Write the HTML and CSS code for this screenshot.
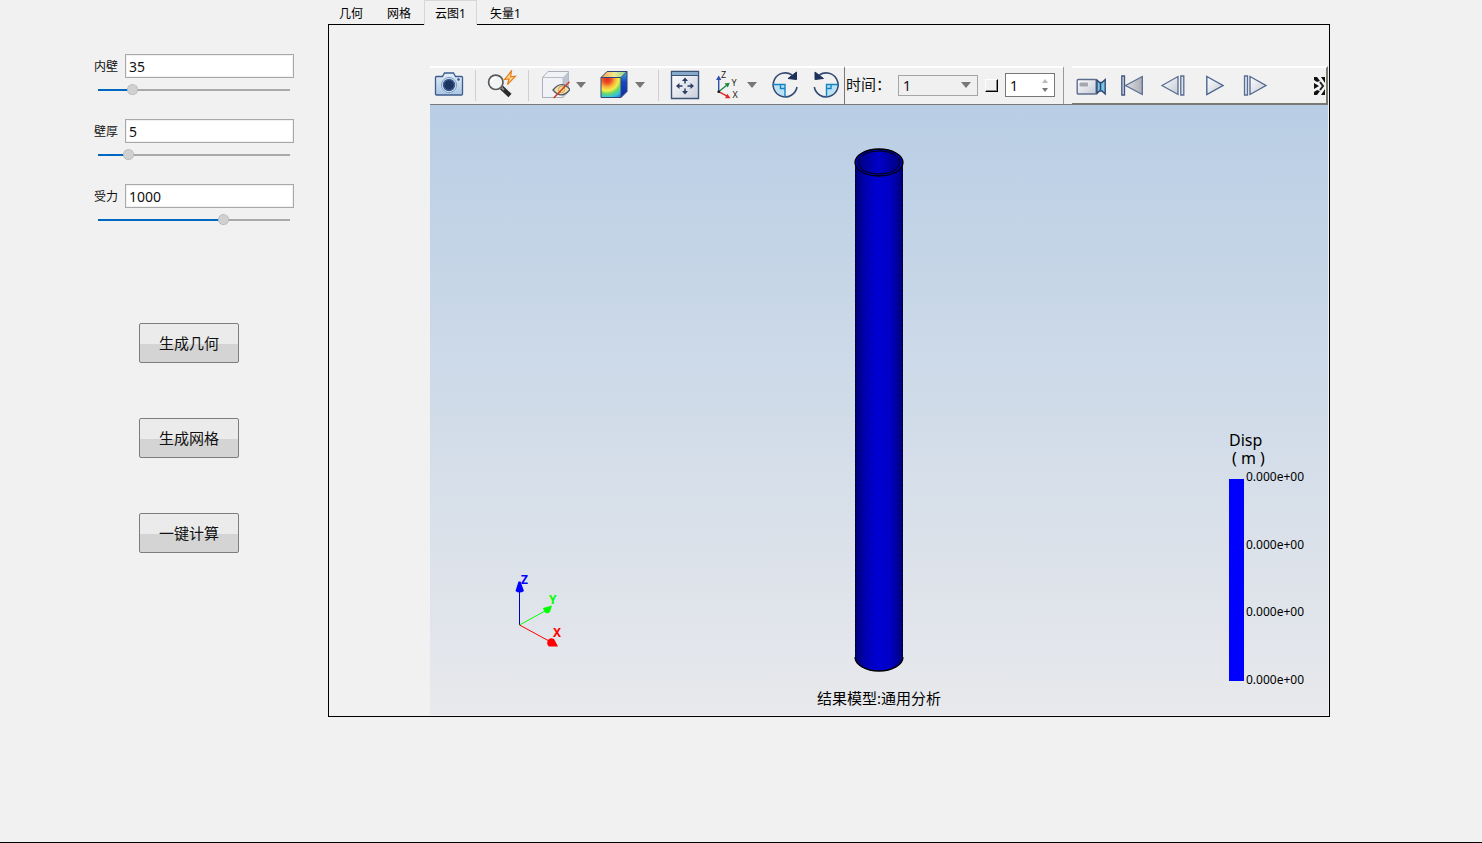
FILE: index.html
```html
<!DOCTYPE html>
<html lang="zh-CN">
<head>
<meta charset="utf-8">
<title>通用分析</title>
<link rel="stylesheet" href="styles.css">
</head>
<body>
<div class="app">
  <aside class="sidebar">
    <form class="params">
      <div class="field">
        <label for="inner">内壁</label>
        <input class="textbox" id="inner" type="text" value="35">
        <input class="slider" type="range" aria-label="内壁" min="0" max="1000" value="160" style="--fill:17%">
      </div>
      <div class="field">
        <label for="thick">壁厚</label>
        <input class="textbox" id="thick" type="text" value="5">
        <input class="slider" type="range" aria-label="壁厚" min="0" max="1000" value="138" style="--fill:15%">
      </div>
      <div class="field">
        <label for="force">受力</label>
        <input class="textbox" id="force" type="text" value="1000">
        <input class="slider" type="range" aria-label="受力" min="0" max="1000" value="663" style="--fill:65%">
      </div>
    </form>
    <div class="actions">
      <button class="action" type="button">生成几何</button>
      <button class="action" type="button">生成网格</button>
      <button class="action" type="button">一键计算</button>
    </div>
  </aside>

  <main class="workspace">
    <nav class="tabs" role="tablist">
      <button class="tab" role="tab">几何</button>
      <button class="tab" role="tab">网格</button>
      <button class="tab tab-active" role="tab" aria-selected="true">云图1</button>
      <button class="tab" role="tab">矢量1</button>
    </nav>
    <section class="panel">
      <div class="toolbars">
        <div class="toolbar toolbar-view">
          <button class="tool" aria-label="截图">
            <svg class="icon" viewBox="0 0 30 30">
              <defs><linearGradient id="cam" x1="0" y1="0" x2="0" y2="1"><stop offset="0" stop-color="#e4eef8"/><stop offset="1" stop-color="#a9c6e4"/></linearGradient></defs>
              <path d="M2.500 6.500H8.500L10.500 3H19.500L21.500 6.500H27.500Q28.500 6.500 28.500 7.500V24Q28.500 25 27.500 25H2.500Q1.500 25 1.500 24V7.500Q1.500 6.500 2.500 6.500Z" fill="url(#cam)" stroke="#3d5c8c" stroke-width="1.300"/>
              <circle cx="15" cy="15" r="7.600" fill="#dbe7f3" stroke="#7f9fc6"/>
              <circle cx="15" cy="15" r="5.500" fill="#1d3561" stroke="#3c5d90" stroke-width="1.500"/>
              <circle cx="24.500" cy="9.500" r="1.200" fill="#2f4f80"/>
            </svg>
          </button>
          <span class="sep"></span>
          <button class="tool" aria-label="查询">
            <svg class="icon" viewBox="0 0 30 30">
              <path d="M14.500 17.500L23 25.500" stroke="#2c2c2c" stroke-width="4.500"/>
              <path d="M14 17L17 20" stroke="#888" stroke-width="2"/>
              <circle cx="8.800" cy="12.300" r="7.200" fill="#f2f4f5" stroke="#58595b" stroke-width="1.700"/>
              <path d="M4.500 12A4.500 4.500 0 0 1 9 7.500" fill="none" stroke="#fff" stroke-width="2"/>
              <path d="M24.500 1L17.500 9.500L22 9L20.500 14.500L28.500 6.200L23.500 6.800Z" fill="#ffdc91" stroke="#e47d1b" stroke-width="1.200"/>
            </svg>
          </button>
          <span class="sep"></span>
          <button class="tool tool-menu" aria-label="显示隐藏">
            <svg class="icon" viewBox="0 0 30 30">
              <path d="M2.500 7.500L8 1.500H28.500V21.500L23 27.500H2.500Z" fill="#f0f2f5" stroke="#aab0bb"/>
              <path d="M23 7.500L28.500 1.500V21.500L23 27.500Z" fill="#bcc4d2"/>
              <path d="M2.500 7.500H23V27.500" fill="none" stroke="#b6bbc6"/>
              <path d="M13 20Q21.500 9.500 30 19.500Q21.500 30 13 20Z" fill="#f7e2a4" stroke="#4f5870" stroke-width="1.300"/>
              <circle cx="21.500" cy="19.500" r="3.200" fill="#f7dc94" stroke="#c9a35a"/>
              <path d="M13.700 28L29.500 11.700" stroke="#cf3c22" stroke-width="1.600"/>
            </svg>
            <span class="caret"></span>
          </button>
          <button class="tool tool-menu" aria-label="云图">
            <svg class="icon" viewBox="0 0 30 30">
              <defs>
                <radialGradient id="heat" gradientUnits="userSpaceOnUse" cx="8" cy="9" r="24"><stop offset="0" stop-color="#d92d20"/><stop offset=".17" stop-color="#ef4b27"/><stop offset=".33" stop-color="#f9b23a"/><stop offset=".48" stop-color="#f4ed48"/><stop offset=".62" stop-color="#66d66b"/><stop offset=".76" stop-color="#35c5de"/><stop offset="1" stop-color="#1c4fd0"/></radialGradient>
                <linearGradient id="heattop"><stop offset="0" stop-color="#f29a55"/><stop offset=".5" stop-color="#f4eb91"/><stop offset="1" stop-color="#7bcf95"/></linearGradient>
                <linearGradient id="heatside" x1="0" y1="0" x2="0" y2="1"><stop offset="0" stop-color="#46b7ce"/><stop offset=".4" stop-color="#1748c4"/><stop offset="1" stop-color="#102a9c"/></linearGradient>
              </defs>
              <path d="M2 7.500H22V27.500H2Z" fill="url(#heat)"/>
              <path d="M2 7.500L8 1.500H28L22 7.500Z" fill="url(#heattop)"/>
              <path d="M22 7.500L28 1.500V21.500L22 27.500Z" fill="url(#heatside)"/>
              <path d="M2 27.500V7.500L8 1.500H28V21.500L22 27.500ZM2 7.500H22V27.500M22 7.500L28 1.500" fill="none" stroke="#31447a"/>
            </svg>
            <span class="caret"></span>
          </button>
          <span class="sep"></span>
          <button class="tool" aria-label="适应窗口">
            <svg class="icon" viewBox="0 0 30 30">
              <defs><linearGradient id="win" x1="0" y1="0" x2="1" y2="1"><stop offset="0" stop-color="#fff"/><stop offset="1" stop-color="#c9d0dd"/></linearGradient></defs>
              <path d="M1.500 1.500H28.500V28.500H1.500Z" fill="url(#win)" stroke="#3b5375" stroke-width="1.400"/>
              <path d="M2 2H28V5H2Z" fill="#87a9cc"/><path d="M1.500 5.500H28.500" stroke="#3b5375"/>
              <path d="M15 9V13.500M15 18.500V23M7.500 16H12.500M17.500 16H22.500" stroke="#2b3d60" stroke-width="1.500"/>
              <path d="M12 11L15 7.500L18 11ZM12 21L15 24.500L18 21ZM9.500 13L6 16L9.500 19ZM20.500 13L24 16L20.500 19Z" fill="#2b3d60"/>
            </svg>
          </button>
          <button class="tool tool-menu" aria-label="视角">
            <svg class="icon" viewBox="0 0 30 30">
              <path d="M7.700 21.700V8" stroke="#2c4fb0" stroke-width="1.400"/><path d="M5 10L7.700 5.500L10.400 10Z" fill="#2c4fb0"/>
              <path d="M7.700 21.700L16 15" stroke="#1d8b45" stroke-width="1.400"/><path d="M13.500 13.500L18.800 12.800L16.800 17.500Z" fill="#1d8b45"/>
              <path d="M7.700 21.700L16 26.200" stroke="#e3272c" stroke-width="1.400"/><path d="M16.300 23.700L19.500 28.200L14 28.200Z" fill="#e3272c"/>
              <circle cx="7.700" cy="21.700" r="1.300" fill="#111"/>
              <text class="axis-small" x="10" y="7.500">Z</text><text class="axis-small" x="20.500" y="15.500">Y</text><text class="axis-small" x="21.500" y="27.500">X</text>
            </svg>
            <span class="caret"></span>
          </button>
          <button class="tool" aria-label="顺时针旋转">
            <svg class="icon" viewBox="0 0 30 30">
              <path d="M4 15H15V26.500Q5.500 24.500 4 15Z" fill="#b9e2f6"/>
              <path d="M27 17A12 12 0 1 1 22 5" fill="none" stroke="#344b75" stroke-width="1.600"/>
              <path d="M3 14.500H15V27M10.500 14.500V18.500H15" fill="none" stroke="#1585c2" stroke-width="1.400"/>
              <path d="M26.500 2V9.500L18 8.500Z" fill="#1e315b" stroke="#1e315b"/>
            </svg>
          </button>
          <button class="tool" aria-label="逆时针旋转">
            <svg class="icon" viewBox="0 0 30 30">
              <path d="M26.500 15H15.500V26.500Q25 24.500 26.500 15Z" fill="#b9e2f6"/>
              <path d="M3.300 17A12 12 0 1 0 8.300 5" fill="none" stroke="#344b75" stroke-width="1.600"/>
              <path d="M27.300 14.500H15.500V27M20 14.500V18.500H15.500" fill="none" stroke="#1585c2" stroke-width="1.400"/>
              <path d="M4 2V9.500L12.500 8.500Z" fill="#1e315b" stroke="#1e315b"/>
            </svg>
          </button>
        </div>
        <div class="toolbar toolbar-time">
          <label class="time-label" for="time">时间：</label>
          <span class="combo">
            <select class="combo-select" id="time"><option>1</option></select>
            <span class="caret combo-caret"></span>
          </span>
          <input class="check" type="checkbox" aria-label="循环">
          <span class="spin">
            <input class="spin-input" type="text" value="1" aria-label="步长">
            <span class="spin-arrows"><span class="spin-up"></span><span class="spin-down"></span></span>
          </span>
        </div>
        <div class="toolbar toolbar-play">
          <button class="tool" aria-label="录制">
            <svg class="icon" viewBox="0 0 30 30">
              <defs><linearGradient id="metal" x1="0" y1="0" x2="1" y2="1"><stop offset="0" stop-color="#fff"/><stop offset="1" stop-color="#c3c9d4"/></linearGradient></defs>
              <rect x="1.200" y="8.500" width="19" height="14.500" rx="1" fill="url(#metal)" stroke="#5d6d8e" stroke-width="1.400"/>
              <rect x="3.500" y="11.500" width="8.500" height="4" rx="1" fill="#a4a7b0"/>
              <path d="M21 9L23.500 11.500H26L29.200 8.500V23L26 20H23.500L21 22.500Z" fill="#7ec4e6" stroke="#28466f" stroke-width="1.300"/>
              <path d="M24.500 12V19.500" stroke="#28466f" stroke-width="1.500"/>
            </svg>
          </button>
          <button class="tool" aria-label="首帧">
            <svg class="icon" viewBox="0 0 30 30"><defs><linearGradient id="grey"><stop offset="0" stop-color="#dfe2e6"/><stop offset="1" stop-color="#aaaeb5"/></linearGradient></defs>
              <path d="M4.800 5H7.500V24H4.800Z" fill="#c6d3e5" stroke="#42587f" stroke-width="1.300"/><path d="M8.500 14.500L25.300 5.500V23.500Z" fill="url(#grey)" stroke="#5a6d92" stroke-width="1.300"/></svg>
          </button>
          <button class="tool" aria-label="上一帧">
            <svg class="icon" viewBox="0 0 30 30"><path d="M4 14.500L20 5.500V23.500Z" fill="url(#metal)" stroke="#5a6d92" stroke-width="1.300"/><path d="M22.800 5H25.800V24H22.800Z" fill="#dce4ee" stroke="#5a6d92" stroke-width="1.300"/></svg>
          </button>
          <button class="tool" aria-label="播放">
            <svg class="icon" viewBox="0 0 30 30"><path d="M7.800 5.500L24 14.500L7.800 23.500Z" fill="url(#metal)" stroke="#4d648e" stroke-width="1.400"/></svg>
          </button>
          <button class="tool" aria-label="下一帧">
            <svg class="icon" viewBox="0 0 30 30"><path d="M4.500 5H7.500V24H4.500Z" fill="#dce4ee" stroke="#5a6d92" stroke-width="1.300"/><path d="M10 5.500L26 14.500L10 23.500Z" fill="url(#metal)" stroke="#4d648e" stroke-width="1.300"/></svg>
          </button>
          <button class="tool more" aria-label="更多">
            <svg class="more-icon" viewBox="0 0 11 18">
              <path d="M0 0H11V18H0Z" fill="#f4f4f4"/>
              <path d="M0 0H3L6 4L3 5L0 3ZM0 18H3L6 14L3 13L0 15ZM0 6L5 9L0 12ZM7 0H11V6ZM7 18H11V12Z" fill="#111"/>
              <path d="M6 5L9 9L6 13" fill="none" stroke="#222" stroke-width="2"/>
            </svg>
          </button>
        </div>
      </div>

      <div class="scene">
        <svg class="model" viewBox="0 0 50 524" role="img" aria-label="圆管模型">
          <defs>
            <linearGradient id="tube"><stop offset="0" stop-color="#000070"/><stop offset=".1" stop-color="#000094"/><stop offset=".28" stop-color="#0000c0"/><stop offset=".5" stop-color="#0000d6"/><stop offset=".72" stop-color="#0000c8"/><stop offset=".9" stop-color="#000098"/><stop offset="1" stop-color="#000070"/></linearGradient>
            <linearGradient id="bore"><stop offset="0" stop-color="#000080"/><stop offset=".5" stop-color="#0000cc"/><stop offset="1" stop-color="#000080"/></linearGradient>
            <pattern id="mesh" width="12" height="10" patternUnits="userSpaceOnUse"><path d="M0 0L6 5L12 0M0 10L6 5L12 10M6 5V10" fill="none" stroke="#000078" stroke-width=".5" opacity=".3"/></pattern>
          </defs>
          <path d="M1 14V510A24 13 0 0 0 49 510V14A24 13 0 0 0 1 14Z" fill="url(#tube)"/>
          <path d="M1 14V510A24 13 0 0 0 49 510V14Z" fill="url(#mesh)"/>
          <path d="M1.500 16V508M48.500 16V508" stroke="#000" stroke-dasharray="3 2" opacity=".7"/>
          <path d="M5 22V514M45 22V514" stroke="#000" stroke-dasharray="2 5" opacity=".2"/>
          <ellipse cx="25" cy="14.500" rx="24" ry="13.500" fill="#0000b4" stroke="#000" stroke-width="1.300"/>
          <ellipse cx="25" cy="14.500" rx="21" ry="11.500" fill="url(#bore)" stroke="#000"/>
          <ellipse cx="25" cy="14.500" rx="21" ry="11.500" fill="url(#mesh)"/>
          <path d="M1 509A24 14 0 0 0 49 509" fill="none" stroke="#000" stroke-width="1.300"/>
        </svg>
        <svg class="triad" viewBox="0 0 60 80" role="img" aria-label="坐标轴">
          <path d="M9.500 53V14" stroke="#0000c0"/><path d="M5.500 19L8.500 9.500H10.500L14 19Q9.500 22 5.500 19Z" fill="#00f"/>
          <path d="M9.500 53L35 39" stroke="#0f0"/><path d="M33 36L42 33.500L40 40Q35 44 33 36Z" fill="#0f0"/>
          <path d="M9.500 53L39 69" stroke="#f00"/><path d="M38 68Q40 65 44 67L48 74.500L39 74.500Q36 72 38 68Z" fill="#f00"/>
          <text class="axis" x="11" y="12" fill="#00f">Z</text><text class="axis" x="39" y="32" fill="#0f0">Y</text><text class="axis" x="43" y="65" fill="#f00">X</text>
        </svg>
        <div class="legend">
          <div class="legend-title">Disp</div>
          <div class="legend-title legend-unit">( m )</div>
          <div class="legend-body">
            <div class="legend-bar"></div>
            <div class="legend-ticks"><span>0.000e+00</span><span>0.000e+00</span><span>0.000e+00</span><span>0.000e+00</span></div>
          </div>
        </div>
        <p class="caption">结果模型:通用分析</p>
      </div>
    </section>
  </main>
</div>
</body>
</html>
```
FILE: styles.css
```css
* { box-sizing: border-box; }

body {
  margin: 0;
  background: #f1f1f1;
  color: #111;
  font: 12px "Noto Sans", "Noto Sans CJK SC", sans-serif;
}

button, input, select { font: inherit; color: inherit; }

.app {
  display: flex;
  min-height: 100vh;
  padding-right: 152px;
  border-bottom: 1px solid #000;
}

/* Parameters */
.sidebar { flex: none; width: 328px; padding: 54px 34px 0 94px; }
.params { display: flex; flex-direction: column; gap: 24px; }
.field {
  display: grid;
  grid-template-columns: 24px 1fr;
  column-gap: 7px;
  row-gap: 6px;
  align-items: center;
}
.field label { padding-top: 2px; white-space: nowrap; line-height: 22px; }
.textbox {
  width: 100%;
  height: 24px;
  padding: 1px 3px 0;
  border: 1px solid #a8a8a8;
  outline: 0;
  background: #fff;
  box-shadow: inset 0 0 0 1px #f1f1f1;
  font-size: 14px;
}
.slider {
  grid-column: 1 / -1;
  appearance: none;
  height: 11px;
  margin: 0 4px;
  background: linear-gradient(90deg, #0067c0 var(--fill), #a9a9a9 var(--fill)) 0 5px / 100% 2px no-repeat;
}
.slider::-webkit-slider-thumb {
  appearance: none;
  width: 11px;
  height: 11px;
  border: 1px dotted #aaa;
  border-radius: 50%;
  background: #d0d0d0;
}

.actions { display: flex; flex-direction: column; align-items: center; gap: 55px; margin: 98px 10px 0 0; }
.action {
  width: 100px;
  height: 40px;
  padding: 0 0 2px;
  border: 1px solid #7d7d7d;
  border-radius: 2px;
  background: linear-gradient(#ebebeb 52%, #d4d4d4 52%);
  font-size: 15px;
}

/* Tabs and panel */
.workspace { flex: 1; min-width: 0; display: flex; flex-direction: column; padding-bottom: 125px; }
.tabs { display: flex; gap: 2px; height: 24px; }
.tab {
  height: 24px;
  padding: 0 10px;
  border: 1px solid transparent;
  border-bottom: 0;
  background: none;
  color: #000;
  white-space: nowrap;
}
.tab-active { z-index: 1; height: 25px; border-color: #d7d7d7; background: #f1f1f1; }
.panel {
  flex: 1;
  display: flex;
  flex-direction: column;
  padding: 41px 1px 1px 101px;
  border: 1px solid #000;
}

/* Toolbars */
.toolbars { display: flex; border-bottom: 1px solid #7a7a7a; }
.toolbar { display: flex; align-items: center; height: 38px; padding-bottom: 2px; border-top: 2px solid #fff; }
.toolbar-view { gap: 11px; padding-left: 4px; padding-right: 3px; border-right: 1px solid #777; }
.toolbar-time { gap: 7px; padding-left: 1px; padding-right: 8px; border-right: 1px solid #999; }
.toolbar-play {
  flex: 1;
  gap: 11px;
  margin-left: 8px;
  padding-left: 4px;
  padding-bottom: 0;
  border-right: 2px solid #7a7a72;
  border-bottom: 1px solid #7a7a72;
}
.tool { display: flex; flex: none; align-items: center; padding: 0; border: 0; background: none; }
.tool-menu { gap: 6px; padding-right: 2px; }
.icon { display: block; width: 30px; height: 30px; }
.sep { width: 1px; height: 31px; background: #cfcfcf; }
.caret { width: 10px; border: 5px solid transparent; border-top: 6px solid #777; border-bottom: 0; }
.more { margin-left: auto; padding-right: 1px; }
.more-icon { display: block; width: 11px; height: 18px; }
.axis-small { font: 9px "Noto Sans", sans-serif; fill: #222; }

.time-label { width: 45px; font-size: 15px; line-height: 20px; padding-bottom: 2px; white-space: nowrap; }
.combo { display: grid; align-items: center; }
.combo-select, .combo-caret { grid-area: 1 / 1; }
.combo-select {
  appearance: none;
  width: 80px;
  height: 21px;
  padding: 0 4px;
  border: 1px solid #a5a5a5;
  border-radius: 0;
  background: #f0f0f0;
  font-size: 14px;
  line-height: 19px;
}
.combo-caret { justify-self: end; margin-right: 7px; pointer-events: none; }
.check {
  appearance: none;
  width: 13px;
  height: 13px;
  margin: 0;
  border: 1px solid #fff;
  border-right-color: #000;
  border-bottom-color: #000;
  background: #f1f1f1;
  box-shadow: inset -1px -1px #888;
}
.spin { display: flex; align-items: center; width: 50px; height: 24px; padding-right: 6px; border: 1px solid #777; background: #fff; }
.spin-input { flex: 1; width: 0; padding: 0 4px; border: 0; outline: 0; background: none; font-size: 14px; }
.spin-arrows { display: grid; gap: 5px; }
.spin-up, .spin-down { border: 3px solid transparent; }
.spin-up { border-top: 0; border-bottom: 4px solid #bbb; }
.spin-down { border-bottom: 0; border-top: 4px solid #777; }

/* Result view */
.scene {
  position: relative;
  flex: 1;
  display: flex;
  flex-direction: column;
  align-items: center;
  padding: 43px 0 6px;
  background: linear-gradient(#b9cee5, #e8e9ec);
}
.model { display: block; width: 50px; height: 524px; }
.triad { position: absolute; left: 80px; bottom: 63px; width: 60px; height: 80px; }
.axis { font: bold 12px "Noto Sans", sans-serif; }
.caption { margin: auto 0 0; color: #000; font-size: 15px; line-height: 22px; }

.legend { position: absolute; right: 18px; bottom: 24px; width: 81px; color: #000; }
.legend-title { font-size: 16px; line-height: 18px; }
.legend-unit { padding-left: 3px; }
.legend-body { display: flex; gap: 2px; }
.legend-bar { width: 15px; height: 202px; margin: 12px 0 10px; background: #00f; }
.legend-ticks { display: flex; flex-direction: column; justify-content: space-between; padding-bottom: 1px; font-size: 12px; line-height: 20px; }
```
